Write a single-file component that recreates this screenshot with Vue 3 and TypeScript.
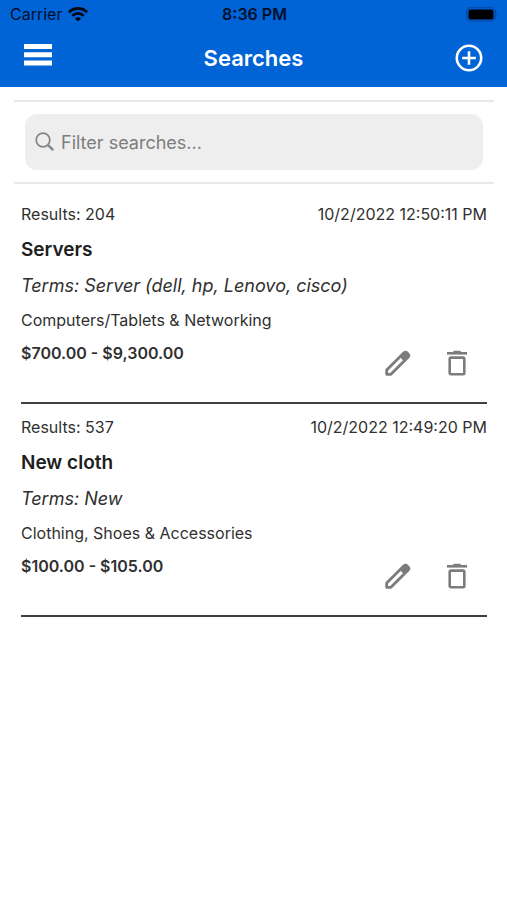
<script setup lang="ts">
import { computed, ref } from 'vue'

interface SavedSearch {
  id: number
  results: number
  date: string
  name: string
  terms: string
  category: string
  price: string
}

const filter = ref('')

const searches = ref<SavedSearch[]>([
  {
    id: 1,
    results: 204,
    date: '10/2/2022 12:50:11 PM',
    name: 'Servers',
    terms: 'Server (dell, hp, Lenovo, cisco)',
    category: 'Computers/Tablets & Networking',
    price: '$700.00 - $9,300.00',
  },
  {
    id: 2,
    results: 537,
    date: '10/2/2022 12:49:20 PM',
    name: 'New cloth',
    terms: 'New',
    category: 'Clothing, Shoes & Accessories',
    price: '$100.00 - $105.00',
  },
])

const visible = computed(() => {
  const q = filter.value.trim().toLowerCase()
  return searches.value.filter((s) => `${s.name} ${s.terms}`.toLowerCase().includes(q))
})

function remove(id: number) {
  searches.value = searches.value.filter((s) => s.id !== id)
}
</script>

<template>
  <div class="app">
    <header class="top">
      <div class="status">
        <span class="carrier">
          Carrier
          <svg width="20" height="15" viewBox="0 0 20 15" fill="none" stroke="#000814" stroke-width="2.8">
            <path d="M1 5.2a12.8 12.8 0 0 1 18 0" />
            <path d="M4.3 8.7a8.1 8.1 0 0 1 11.4 0" />
            <path d="M10 14.6 6.9 11.5a4.4 4.4 0 0 1 6.2 0z" fill="#000814" stroke="none" />
          </svg>
        </span>
        <span class="clock">8:36 PM</span>
        <svg class="battery" width="33" height="15" viewBox="0 0 33 15">
          <rect x="0.75" y="0.75" width="28.5" height="13.5" rx="4" fill="none" stroke="#0046a0" stroke-width="1.2" />
          <rect x="2.5" y="2.5" width="25" height="10" rx="2" fill="#000" />
          <path d="M31 5.2q2 2.3 0 4.6z" fill="#0046a0" />
        </svg>
      </div>
      <nav class="bar">
        <button class="icon-btn" type="button" aria-label="Menu">
          <svg width="28" height="28" viewBox="0 0 28 28" fill="#fff">
            <path d="M0 0h28v5H0zM0 8.2h28v5H0zM0 16.4h28v5H0z" />
          </svg>
        </button>
        <h1>Searches</h1>
        <button class="icon-btn add" type="button" aria-label="Add search">
          <svg width="28" height="28" viewBox="0 0 28 28" fill="none" stroke="#fff" stroke-width="2.6">
            <circle cx="14" cy="14" r="12.2" />
            <path d="M14 7.2v13.6M7.2 14h13.6" />
          </svg>
        </button>
      </nav>
    </header>

    <main>
      <div class="filter">
        <label class="box">
          <svg width="20" height="20" viewBox="0 0 20 20" fill="none" stroke="#858585" stroke-width="1.7">
            <circle cx="8" cy="8" r="6.8" />
            <path d="M12.8 12.8 18.2 18.2" stroke-width="2.4" />
          </svg>
          <input v-model="filter" type="text" placeholder="Filter searches..." aria-label="Filter searches" />
        </label>
      </div>

      <ul class="list">
        <li v-for="s in visible" :key="s.id" class="item">
          <div class="meta">
            <span>Results: {{ s.results }}</span>
            <time>{{ s.date }}</time>
          </div>
          <h2>{{ s.name }}</h2>
          <p class="terms">Terms: {{ s.terms }}</p>
          <p class="category">{{ s.category }}</p>
          <div class="foot">
            <strong>{{ s.price }}</strong>
            <div class="actions">
              <button type="button" :aria-label="`Edit ${s.name}`">
                <svg width="28" height="28" viewBox="0 0 28 28">
                  <path
                    d="M2.7 25.3v-4.2L20 3.8q1.4-1.4 2.8 0l1.4 1.4q1.4 1.4 0 2.8L6.9 25.3z"
                    fill="none" stroke="#7c7c7c" stroke-width="2.8" stroke-linejoin="round"
                  />
                  <path d="M16.6 6.2 20 2.8h3.4l1.8 1.8V8l-3.8 3.6-2.2-.2-2.4-2.4z" fill="#7c7c7c" />
                </svg>
              </button>
              <button type="button" :aria-label="`Delete ${s.name}`" @click="remove(s.id)">
                <svg width="20" height="26" viewBox="0 0 20 26" fill="none" stroke="#7c7c7c" stroke-width="2.6">
                  <path d="M0 3.3h20" />
                  <path d="M5.5 2.2 7 .8h6l1.5 1.4z" fill="#7c7c7c" stroke="none" />
                  <rect x="2.7" y="7.6" width="14.6" height="16.6" rx="1.2" />
                </svg>
              </button>
            </div>
          </div>
        </li>
      </ul>
    </main>
  </div>
</template>

<style>
body {
  margin: 0;
  background: #fff;
}
</style>

<style scoped>
.app {
  min-height: 100vh;
  background: #fff;
  color: #303030;
  font-family: Inter, "Liberation Sans", sans-serif;
  font-size: 16px;
  line-height: 23px;
}
button {
  display: flex;
  align-items: center;
  justify-content: center;
  padding: 0;
  border: 0;
  background: none;
  cursor: pointer;
}
.top {
  background: #0063d6;
}
.status {
  display: grid;
  grid-template-columns: 1fr auto 1fr;
  align-items: center;
  height: 29px;
  padding: 0 8px 0 10px;
  color: #000f2b;
}
.carrier {
  display: flex;
  align-items: center;
  gap: 6px;
}
.clock {
  font-weight: 600;
}
.battery {
  justify-self: end;
}
.bar {
  display: grid;
  grid-template-columns: 1fr auto 1fr;
  align-items: center;
  height: 58px;
  padding: 0 24px;
}
.icon-btn {
  justify-self: start;
}
.add {
  justify-self: end;
}
h1 {
  margin: 0;
  color: #fff;
  font-size: 22px;
  line-height: 28px;
  font-weight: 600;
}
main {
  padding: 13px 13px 13px 14px;
}
.filter {
  padding: 12px 11px;
  border-top: 2px solid #e8e8e8;
  border-bottom: 2px solid #e8e8e8;
}
.box {
  display: flex;
  align-items: center;
  gap: 6px;
  height: 56px;
  padding: 0 10px;
  border-radius: 12px;
  background: #eee;
}
.box input {
  flex: 1;
  min-width: 0;
  padding: 0;
  border: 0;
  outline: 0;
  background: none;
  color: #303030;
  font: inherit;
  font-size: 18px;
  line-height: 25px;
}
.box input::placeholder {
  color: #7d7d7d;
  opacity: 1;
}
.list {
  margin: 0;
  padding: 7px 7px 0;
  list-style: none;
}
.item {
  display: flex;
  flex-direction: column;
  gap: 11px;
  padding: 12px 0 19px;
  border-bottom: 2px solid #404040;
}
.meta,
.foot {
  display: flex;
  align-items: flex-start;
  justify-content: space-between;
}
h2,
p {
  margin: 0;
}
h2 {
  color: #202020;
  font-size: 19px;
  line-height: 25px;
  font-weight: 600;
}
.terms {
  font-size: 18px;
  line-height: 25px;
  font-style: italic;
}
strong {
  font-weight: 600;
  line-height: 20px;
}
.actions {
  display: flex;
  gap: 15px;
  padding-right: 8px;
}
.actions button {
  width: 44px;
  height: 40px;
}
</style>
